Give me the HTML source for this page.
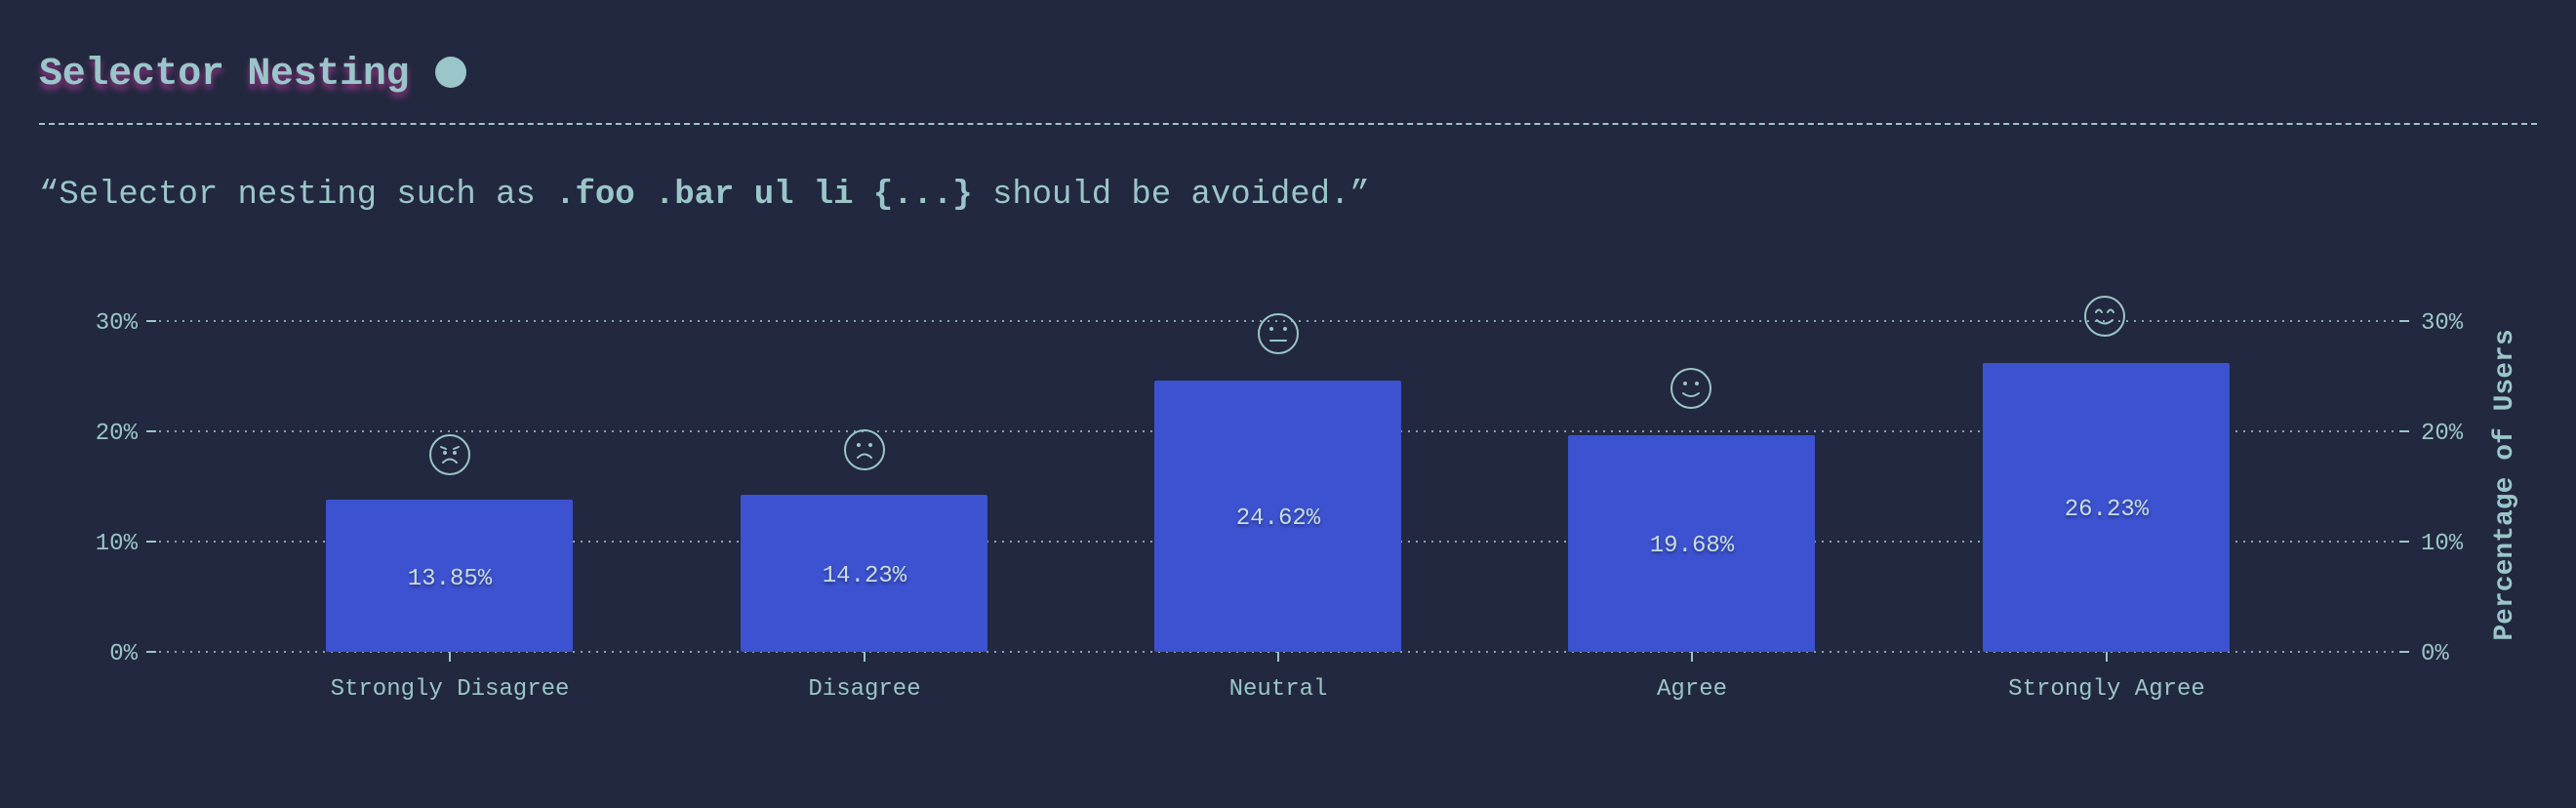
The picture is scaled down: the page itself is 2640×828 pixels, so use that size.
<!DOCTYPE html>
<html><head><meta charset="utf-8"><style>
html,body{margin:0;padding:0;background:#22283f;}
body{width:2640px;height:828px;position:relative;overflow:hidden;font-family:"Liberation Mono","DejaVu Sans Mono",monospace;color:#9ac6c9;}
.title{position:absolute;left:40px;top:52px;font-size:40px;font-weight:bold;line-height:50px;text-shadow:0 5px 7px rgba(190,60,160,0.75);letter-spacing:-0.3px;}
.dot{position:absolute;left:446px;top:58px;width:32px;height:32px;border-radius:50%;background:#9ac6c9;}
.rule{position:absolute;left:40px;top:126px;width:2560px;height:0;border-top:2px dashed #9ac6c9;}
.quote{position:absolute;left:40px;top:177px;font-size:34px;line-height:46px;white-space:pre;letter-spacing:-0.05px;}
.quote b{font-weight:bold;}
svg{position:absolute;left:0;top:0;}
</style></head><body>
<div class="title">Selector Nesting</div>
<div class="dot"></div>
<div class="rule"></div>
<div class="quote">“Selector nesting such as <b>.foo .bar ul li {...}</b> should be avoided.”</div>
<svg width="2640" height="828" font-family="Liberation Mono, DejaVu Sans Mono, monospace">
<g stroke="#9ac6c9" stroke-width="2" stroke-dasharray="2 6" opacity="0.8">
<line x1="163" y1="329" x2="2456" y2="329"/>
<line x1="163" y1="442" x2="2456" y2="442"/>
<line x1="163" y1="555" x2="2456" y2="555"/>
<line x1="163" y1="668" x2="2456" y2="668"/>
</g>
<g stroke="#9ac6c9" stroke-width="2">
<line x1="150" y1="329" x2="160" y2="329"/><line x1="150" y1="442" x2="160" y2="442"/><line x1="150" y1="555" x2="160" y2="555"/><line x1="150" y1="668" x2="160" y2="668"/>
<line x1="2459" y1="329" x2="2469" y2="329"/><line x1="2459" y1="442" x2="2469" y2="442"/><line x1="2459" y1="555" x2="2469" y2="555"/><line x1="2459" y1="668" x2="2469" y2="668"/>
<line x1="461" y1="668" x2="461" y2="678"/><line x1="886" y1="668" x2="886" y2="678"/><line x1="1310" y1="668" x2="1310" y2="678"/><line x1="1734" y1="668" x2="1734" y2="678"/><line x1="2159" y1="668" x2="2159" y2="678"/>
</g>
<g fill="#9ac6c9" font-size="24">
<g text-anchor="end"><text x="141" y="337">30%</text><text x="141" y="450">20%</text><text x="141" y="563">10%</text><text x="141" y="676">0%</text></g>
<text x="2481" y="337">30%</text><text x="2481" y="450">20%</text><text x="2481" y="563">10%</text><text x="2481" y="676">0%</text>
<g text-anchor="middle"><text x="461" y="712">Strongly Disagree</text><text x="886" y="712">Disagree</text><text x="1310" y="712">Neutral</text><text x="1734" y="712">Agree</text><text x="2159" y="712">Strongly Agree</text></g>
<text transform="translate(2574,497) rotate(-90)" text-anchor="middle" font-size="28" font-weight="bold">Percentage of Users</text>
</g>
<g fill="#3c52d0">
<rect x="334" y="512" width="253" height="156" rx="2"/>
<rect x="759" y="507" width="253" height="161" rx="2"/>
<rect x="1183" y="390" width="253" height="278" rx="2"/>
<rect x="1607" y="446" width="253" height="222" rx="2"/>
<rect x="2032" y="372" width="253" height="296" rx="2"/>
</g>
<g fill="#c9dde0" font-size="24" text-anchor="middle" style="text-shadow:0 2px 3px rgba(0,0,0,0.4)">
<text x="461" y="599">13.85%</text><text x="886" y="596">14.23%</text><text x="1310" y="537">24.62%</text><text x="1734" y="565">19.68%</text><text x="2159" y="528">26.23%</text>
</g>
<g fill="none" stroke="#9ac6c9" stroke-width="2" stroke-linecap="round">
<g transform="translate(461,466)"><circle r="20"/><path d="M-9,-8 L-4,-6 M9,-8 L4,-6 M-7,8 Q0,1 7,8"/><circle cx="-5" cy="-2" r="1" fill="#9ac6c9"/><circle cx="5" cy="-2" r="1" fill="#9ac6c9"/></g>
<g transform="translate(886,461)"><circle r="20"/><path d="M-7,8 Q0,1 7,8"/><circle cx="-6" cy="-5" r="1" fill="#9ac6c9"/><circle cx="6" cy="-5" r="1" fill="#9ac6c9"/></g>
<g transform="translate(1310,342)"><circle r="20"/><path d="M-8,7 L8,7"/><circle cx="-7" cy="-5" r="1" fill="#9ac6c9"/><circle cx="7" cy="-5" r="1" fill="#9ac6c9"/></g>
<g transform="translate(1733,398)"><circle r="20"/><path d="M-8,5 Q0,11 8,5"/><circle cx="-6" cy="-5" r="1" fill="#9ac6c9"/><circle cx="6" cy="-5" r="1" fill="#9ac6c9"/></g>
<g transform="translate(2157,324)"><circle r="20"/><path d="M-8,4 Q0,11 8,4 M-9,-4 Q-6,-9 -3,-4 M3,-4 Q6,-9 9,-4"/></g>
</g>
</svg>
</body></html>
